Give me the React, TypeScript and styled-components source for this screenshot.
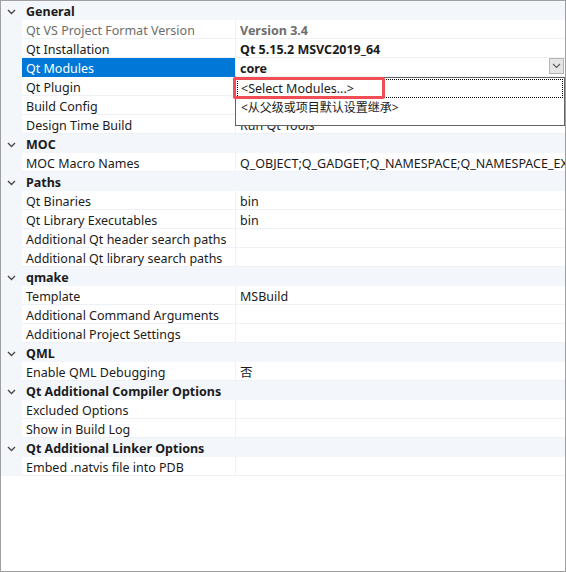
import styled, { createGlobalStyle } from "styled-components";

type Prop = {
  name: string;
  value?: string;
  bold?: boolean;
  readOnly?: boolean;
  selected?: boolean;
};

type Section = { title: string; rows: Prop[] };

const sections: Section[] = [
  {
    title: "General",
    rows: [
      { name: "Qt VS Project Format Version", value: "Version 3.4", bold: true, readOnly: true },
      { name: "Qt Installation", value: "Qt 5.15.2 MSVC2019_64", bold: true },
      { name: "Qt Modules", value: "core", bold: true, selected: true },
      { name: "Qt Plugin" },
      { name: "Build Config" },
      { name: "Design Time Build", value: "Run Qt Tools" },
    ],
  },
  {
    title: "MOC",
    rows: [
      {
        name: "MOC Macro Names",
        value: "Q_OBJECT;Q_GADGET;Q_NAMESPACE;Q_NAMESPACE_EXPORT",
      },
    ],
  },
  {
    title: "Paths",
    rows: [
      { name: "Qt Binaries", value: "bin" },
      { name: "Qt Library Executables", value: "bin" },
      { name: "Additional Qt header search paths" },
      { name: "Additional Qt library search paths" },
    ],
  },
  {
    title: "qmake",
    rows: [
      { name: "Template", value: "MSBuild" },
      { name: "Additional Command Arguments" },
      { name: "Additional Project Settings" },
    ],
  },
  {
    title: "QML",
    rows: [{ name: "Enable QML Debugging", value: "否" }],
  },
  {
    title: "Qt Additional Compiler Options",
    rows: [{ name: "Excluded Options" }, { name: "Show in Build Log" }],
  },
  {
    title: "Qt Additional Linker Options",
    rows: [{ name: "Embed .natvis file into PDB" }],
  },
];

const options = [
  { label: "<Select Modules...>", cjk: false },
  { label: "<从父级或项目默认设置继承>", cjk: true },
];

function App() {
  return (
    <>
      <GlobalStyle />
      <Frame>
        <Grid>
          {sections.map((section) => (
            <div key={section.title}>
              <HeaderRow>
                <Toggle>
                  <svg width="9" height="6" viewBox="0 0 9 6">
                    <path d="M1 1 L4.5 4.5 L8 1" fill="none" stroke="#4a4a4a" strokeWidth="1.4" />
                  </svg>
                </Toggle>
                <HeaderTitle>{section.title}</HeaderTitle>
              </HeaderRow>
              {section.rows.map((row) => (
                <PropRow key={row.name}>
                  <Gutter />
                  <NameCell selected={row.selected} readOnly={row.readOnly}>
                    {row.name}
                  </NameCell>
                  <ValueCell bold={row.bold} readOnly={row.readOnly}>
                    <ValueText>{row.value}</ValueText>
                    {row.selected && (
                      <ComboButton>
                        <svg width="9" height="6" viewBox="0 0 9 6">
                          <path d="M1 1 L4.5 4.5 L8 1" fill="none" stroke="#5a5a5a" strokeWidth="1.1" />
                        </svg>
                      </ComboButton>
                    )}
                  </ValueCell>
                </PropRow>
              ))}
            </div>
          ))}
        </Grid>
        <DropList>
          {options.map((opt, i) => (
            <Option key={opt.label} focused={i === 0} cjk={opt.cjk}>
              {opt.label}
            </Option>
          ))}
        </DropList>
        <Highlight />
      </Frame>
    </>
  );
}

const GlobalStyle = createGlobalStyle`
  html, body {
    margin: 0;
    padding: 0;
    background: #ffffff;
  }
  body {
    font-family: "Noto Sans", "Noto Sans CJK SC", sans-serif;
    font-size: 12.5px;
    color: #1b1b1b;
  }
`;

const Frame = styled.div`
  position: relative;
  width: 566px;
  height: 572px;
  box-sizing: border-box;
  border: 1px solid #a0a0a0;
  background: #ffffff;
  overflow: hidden;
`;

const Grid = styled.div`
  display: flex;
  flex-direction: column;
`;

const HeaderRow = styled.div`
  display: flex;
  align-items: flex-start;
  height: 19px;
  background: #f3f6fb;
`;

const Toggle = styled.div`
  width: 21px;
  height: 19px;
  display: flex;
  justify-content: center;
  align-items: center;
  padding-top: 2px;
  box-sizing: border-box;
`;

const HeaderTitle = styled.div`
  font-weight: bold;
  padding-left: 4px;
  padding-top: 2px;
  color: #1b1b1b;
  line-height: 17px;
`;

const PropRow = styled.div`
  display: flex;
  height: 19px;
`;

const Gutter = styled.div`
  width: 21px;
  flex: none;
  background: #f3f6fb;
`;

const NameCell = styled.div<{ selected?: boolean; readOnly?: boolean }>`
  width: 214px;
  height: 19px;
  flex: none;
  box-sizing: border-box;
  padding-left: 4px;
  padding-top: 2px;
  line-height: 17px;
  white-space: nowrap;
  overflow: hidden;
  border-right: 1px solid #eef1f6;
  border-bottom: 1px solid ${(p) => (p.selected ? "#0078d7" : "#eef1f6")};
  background: ${(p) => (p.selected ? "#0078d7" : "#ffffff")};
  color: ${(p) => (p.selected ? "#ffffff" : p.readOnly ? "#6d6d6d" : "#1b1b1b")};
`;

const ValueCell = styled.div<{ bold?: boolean; readOnly?: boolean }>`
  flex: 1;
  min-width: 0;
  display: flex;
  align-items: flex-start;
  box-sizing: border-box;
  height: 19px;
  padding-left: 4px;
  border-bottom: 1px solid #eef1f6;
  font-weight: ${(p) => (p.bold ? "bold" : "normal")};
  color: ${(p) => (p.readOnly ? "#6d6d6d" : "#1b1b1b")};
`;

const ValueText = styled.div`
  flex: 1;
  height: 18px;
  padding-top: 2px;
  box-sizing: border-box;
  line-height: 17px;
  white-space: nowrap;
  overflow: hidden;
`;

const ComboButton = styled.div`
  width: 15px;
  height: 16px;
  margin-right: 1px;
  box-sizing: border-box;
  border: 1px solid #b4b4b4;
  background: #e5e5e5;
  display: flex;
  align-items: center;
  justify-content: center;
`;

const DropList = styled.div`
  position: absolute;
  left: 234px;
  top: 76px;
  width: 330px;
  height: 49px;
  box-sizing: border-box;
  border: 1px solid #646464;
  background: #ffffff;
  padding: 1px 1px 0 1px;
  z-index: 2;
`;

const Option = styled.div<{ focused?: boolean; cjk?: boolean }>`
  height: 19px;
  padding-top: 2px;
  line-height: 16px;
  box-sizing: border-box;
  padding-left: 4px;
  font-size: ${(p) => (p.cjk ? "12px" : "12.5px")};
  color: #1b1b1b;
  white-space: nowrap;
  outline: ${(p) => (p.focused ? "1px dotted #000000" : "none")};
  outline-offset: -1px;
`;

const Highlight = styled.div`
  position: absolute;
  left: 232px;
  top: 76px;
  width: 152px;
  height: 22px;
  box-sizing: border-box;
  border: 3px solid #f04e54;
  border-radius: 2px;
  z-index: 3;
  pointer-events: none;
`;

export default App;
